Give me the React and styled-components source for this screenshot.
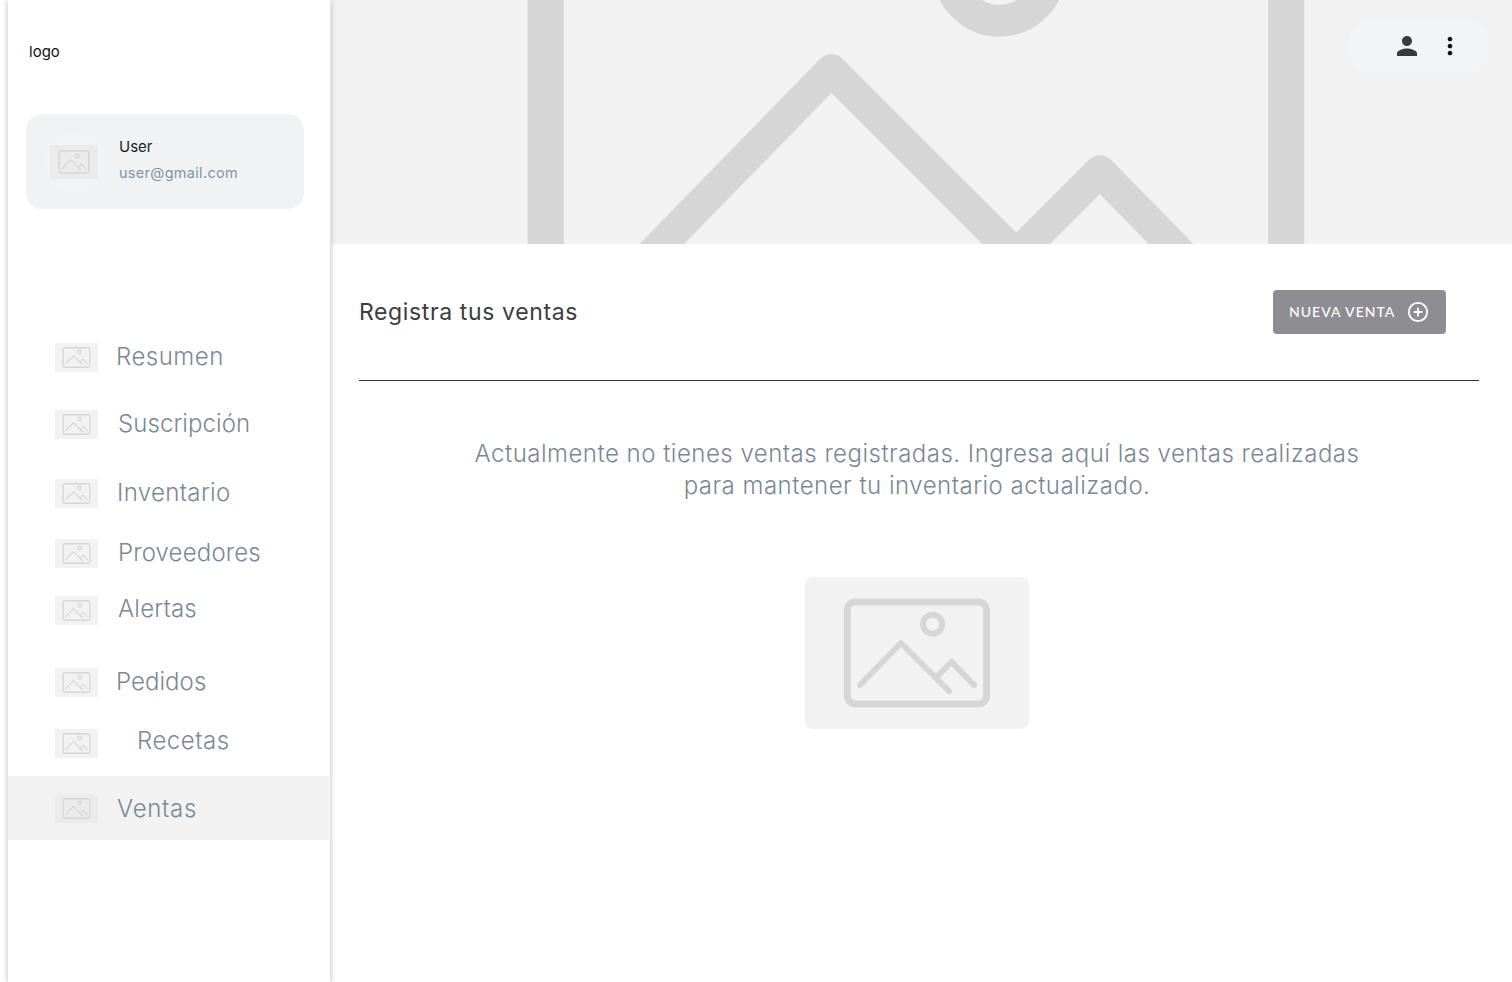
import React from 'react';
import styled, { createGlobalStyle } from 'styled-components';
import { MdPerson, MdMoreVert } from 'react-icons/md';
import { CirclePlus } from 'lucide-react';

const Global = createGlobalStyle`
  html, body { margin: 0; padding: 0; background: #fff; }
  * { box-sizing: border-box; }
`;

const Page = styled.div`
  display: flex;
  width: 1512px;
  height: 982px;
  padding-left: 8px;
  overflow: hidden;
  font-family: Inter, "Liberation Sans", sans-serif;
`;

const Sidebar = styled.aside`
  flex: 0 0 322px;
  height: 982px;
  background: #fff;
  box-shadow: 0 0 6px rgba(0, 0, 0, 0.28);
  display: flex;
  flex-direction: column;
  position: relative;
  z-index: 1;
`;

const Logo = styled.div`
  padding: 43px 0 0 21px;
  height: 114px;
  font-size: 15px;
  line-height: 18px;
  color: #111;
`;

const UserCard = styled.div`
  margin-left: 18px;
  width: 278px;
  height: 95px;
  border-radius: 16px;
  background: #f1f2f4;
  display: flex;
  align-items: center;
  padding-left: 18px;
`;

const Avatar = styled.div`
  width: 60px;
  height: 60px;
  border-radius: 50%;
  background: #f2f3f4;
  display: flex;
  align-items: center;
  justify-content: center;
  flex: none;
`;

const UserText = styled.div`
  margin-left: 15px;
  display: flex;
  flex-direction: column;
  gap: 8px;
  margin-top: -3px;
`;

const UserName = styled.div`
  font-size: 15px;
  line-height: 18px;
  color: #1c1c1e;
`;

const UserMail = styled.div`
  font-size: 14.5px;
  line-height: 18px;
  letter-spacing: 0.3px;
  color: #87929f;
`;

const Nav = styled.nav`
  margin-top: 134px;
  display: flex;
  flex-direction: column;
`;

const NavRow = styled.div`
  display: flex;
  align-items: center;
  padding-left: 47px;
  height: ${(p) => (p.$active ? 64 : 29)}px;
  margin-top: ${(p) => p.$top}px;
  ${(p) => p.$active && `
    background: #f2f2f2;
    margin-right: 1px;
  `}
`;

const NavLabel = styled.span`
  margin-left: ${(p) => p.$gap}px;
  margin-bottom: ${(p) => p.$lift || 0}px;
  font-size: 24px;
  font-weight: 300;
  line-height: 29px;
  letter-spacing: ${(p) => p.$ls}px;
  color: #7b8896;
`;

const Placeholder = styled.div`
  flex: none;
  width: ${(p) => p.$w}px;
  height: ${(p) => p.$h}px;
  margin-top: ${(p) => p.$mt || 0}px;
  background: ${(p) => p.$bg || '#f2f2f2'};
  border-radius: ${(p) => p.$r || 0}px;
  svg { display: block; width: 100%; height: 100%; }
`;

const Main = styled.main`
  flex: 1;
  min-width: 0;
  display: flex;
  flex-direction: column;
`;

const Banner = styled.div`
  height: 244px;
  background: #f2f2f2;
  position: relative;
  flex: none;
  margin-left: 1px;
  svg.art { display: block; width: 100%; height: 100%; }
`;

const TopPill = styled.div`
  position: absolute;
  top: 20px;
  right: 24px;
  width: 139px;
  height: 53px;
  border-radius: 22px;
  background: #f3f4f6;
  display: flex;
  align-items: center;
  padding: 0 0 2px 43px;
  gap: 14px;
`;

const Content = styled.div`
  padding: 0 33px 0 28px;
  margin-left: 1px;
  flex: 1;
`;

const Header = styled.header`
  height: 137px;
  padding: 46px 33px 0 0;
  display: flex;
  justify-content: space-between;
  align-items: flex-start;
  border-bottom: 1px solid #333;
`;

const Title = styled.h1`
  margin: 0;
  font-size: 23px;
  font-weight: 400;
  line-height: 44px;
  letter-spacing: 0.62px;
  color: #3c3c3e;
`;

const Button = styled.button`
  width: 173px;
  height: 44px;
  border: 0;
  border-radius: 4px;
  background: #8e8d92;
  color: #fff;
  font-family: Lato, sans-serif;
  font-size: 14px;
  font-weight: 500;
  line-height: 16px;
  letter-spacing: 1.02px;
  display: flex;
  align-items: center;
  padding: 0 0 0 16px;
  gap: 12px;
`;

const ButtonLabel = styled.span`
  margin-top: -1px;
`;

const Empty = styled.section`
  display: flex;
  flex-direction: column;
  align-items: center;
  padding: 57px 4px 0 0;
`;

const Message = styled.p`
  margin: 0;
  width: 900px;
  text-align: center;
  font-size: 24px;
  font-weight: 300;
  line-height: 32px;
  letter-spacing: 0.49px;
  color: #7b8794;
`;

const Glyph = ({ className, viewBox = '0 0 224 152', preserve }) => (
  <svg
    className={className}
    viewBox={viewBox}
    preserveAspectRatio={preserve}
    fill="none"
    stroke="#d6d6d6"
    strokeWidth="6"
    strokeLinecap="round"
    strokeLinejoin="round"
  >
    <rect x="42.3" y="25" width="139.2" height="102" rx="8" strokeWidth="6.8" />
    <circle cx="127.6" cy="47.2" r="9.5" />
    <path d="M55 108 L96 66 L144 114" />
    <path d="M131.5 100 L146.5 85 L169 108" />
  </svg>
);

const items = [
  { label: 'Resumen', top: 0, gap: 18, ls: 0.5, lift: 2 },
  { label: 'Suscripción', top: 38, gap: 20, ls: 0.08, lift: 2 },
  { label: 'Inventario', top: 40, gap: 19, ls: 0.35, lift: 2 },
  { label: 'Proveedores', top: 31, gap: 20, ls: 0.17, lift: 2 },
  { label: 'Alertas', top: 28, gap: 20, ls: 0.2, lift: 4 },
  { label: 'Pedidos', top: 43, gap: 18, ls: 0.05, lift: 2 },
  { label: 'Recetas', top: 32, gap: 39, ls: 0.5, lift: 6 },
];

export default function App() {
  return (
    <>
      <Global />
      <Page>
        <Sidebar>
          <Logo>logo</Logo>
          <UserCard>
            <Avatar>
              <Placeholder $w={48} $h={34} $bg="#ebebeb">
                <Glyph />
              </Placeholder>
            </Avatar>
            <UserText>
              <UserName>User</UserName>
              <UserMail>user@gmail.com</UserMail>
            </UserText>
          </UserCard>
          <Nav>
            {items.map((it) => (
              <NavRow key={it.label} $top={it.top}>
                <Placeholder $w={43} $h={29}>
                  <Glyph />
                </Placeholder>
                <NavLabel $gap={it.gap} $ls={it.ls} $lift={it.lift}>{it.label}</NavLabel>
              </NavRow>
            ))}
            <NavRow $top={18} $active>
              <Placeholder $w={43} $h={29} $bg="#ebebeb">
                <Glyph />
              </Placeholder>
              <NavLabel $gap={19} $ls={0.7}>Ventas</NavLabel>
            </NavRow>
          </Nav>
        </Sidebar>
        <Main>
          <Banner>
            <Glyph className="art" viewBox="1.94 52.8 222 45.86" preserve="none" />
            <TopPill>
              <MdPerson size={30} color="#3a3a3c" />
              <MdMoreVert size={28} color="#111" />
            </TopPill>
          </Banner>
          <Content>
            <Header>
              <Title>Registra tus ventas</Title>
              <Button>
                <ButtonLabel>NUEVA VENTA</ButtonLabel>
                <CirclePlus size={22} strokeWidth={2} />
              </Button>
            </Header>
            <Empty>
              <Message>
                Actualmente no tienes ventas registradas. Ingresa aquí las ventas realizadas
                <br />
                para mantener tu inventario actualizado.
              </Message>
              <Placeholder $w={224} $h={152} $r={8} $mt={75}>
                <Glyph />
              </Placeholder>
            </Empty>
          </Content>
        </Main>
      </Page>
    </>
  );
}
